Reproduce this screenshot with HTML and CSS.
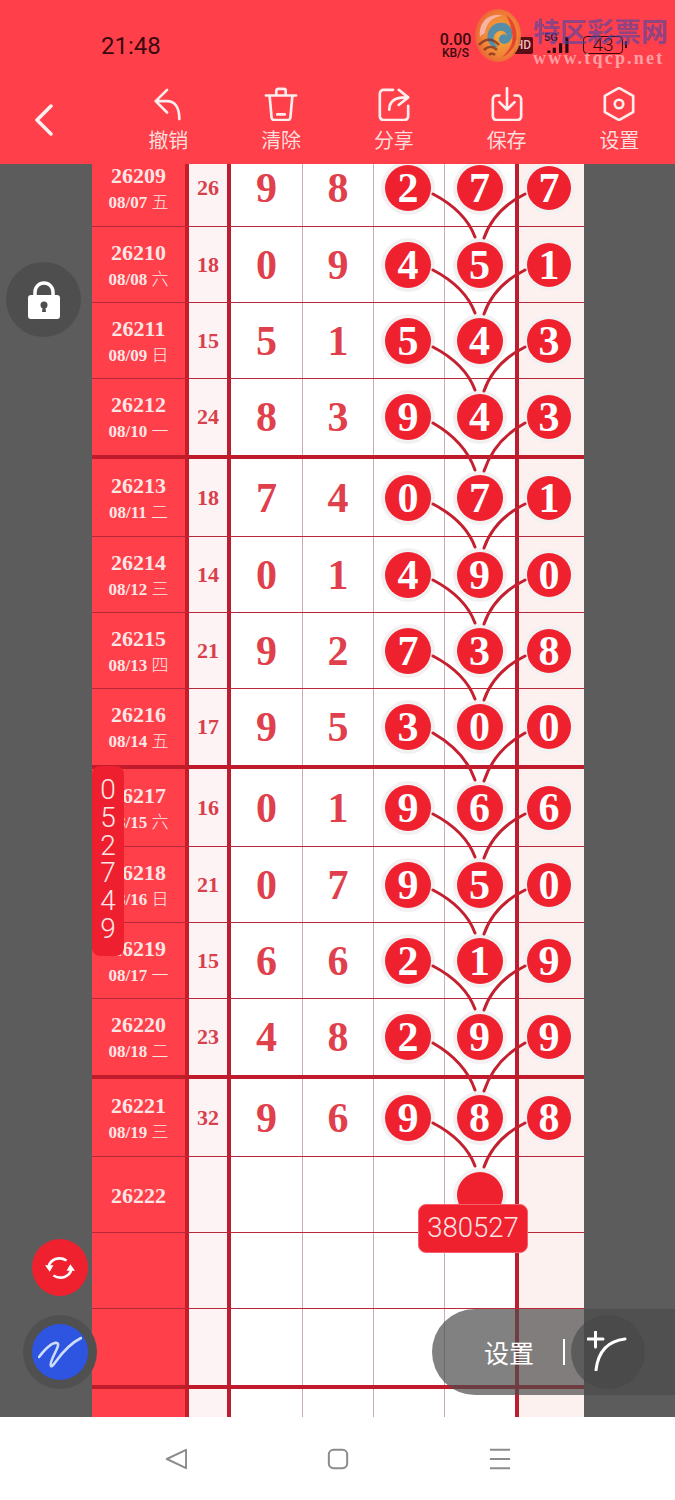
FILE: index.html
```html
<!DOCTYPE html>
<html lang="zh">
<head>
<meta charset="utf-8">
<title>规律图</title>
<link rel="stylesheet" href="styles.css">
</head>
<body>
<div class="screen">
  <header class="header">
    <div class="status">
      <span class="time">21:48</span>
      <div class="status-right">
        <div class="speed"><span class="speed-num">0.00</span><span class="speed-unit">KB/S</span></div>
        <span class="hd">HD</span>
        <div class="signal"><span class="five-g">5G</span>
          <svg class="bars" viewBox="0 0 28 20"><path d="M5 16v3M11 13v6M18 8v11M25 1v18"/></svg>
        </div>
        <span class="battery">43</span>
      </div>
    </div>
    <nav class="toolbar">
      <svg class="back" viewBox="0 0 20 32"><path d="M17 2 3 16l14 14"/></svg>
      <div class="tools">
        <div class="tool"><svg viewBox="0 0 36 36"><path d="M17 3 5 15l12 12M5 15h12c8 0 13 6 13 19"/></svg><span>撤销</span></div>
        <div class="tool"><svg viewBox="0 0 36 36"><path d="M2 9h32M13 8V4a2 2 0 0 1 2-2h6a2 2 0 0 1 2 2v4M6 10l2 22a3 3 0 0 0 3 3h14a3 3 0 0 0 3-3l2-22M14 29h8"/></svg><span>清除</span></div>
        <div class="tool"><svg viewBox="0 0 36 36"><path d="M17 3H7a4 4 0 0 0-4 4v24a4 4 0 0 0 4 4h22a4 4 0 0 0 4-4V20M13 24c0-9 6-13 17-13M23 3l10 8-10 8"/></svg><span>分享</span></div>
        <div class="tool"><svg viewBox="0 0 36 36"><path d="M10 9H7a4 4 0 0 0-4 4v18a4 4 0 0 0 4 4h22a4 4 0 0 0 4-4V13a4 4 0 0 0-4-4h-3M18 1v22M10 16l8 8 8-8"/></svg><span>保存</span></div>
        <div class="tool"><svg viewBox="0 0 36 36"><path d="M18 1 33 9.500v17L18 35 3 26.500v-17z"/><circle cx="18" cy="18" r="4.500"/></svg><span>设置</span></div>
      </div>
    </nav>
    <div class="watermark">
      <svg class="logo" viewBox="0 0 46 53">
        <defs>
          <radialGradient id="orb" cx="55%" cy="50%" r="62%">
            <stop offset="0" stop-color="#f6b23f"/>
            <stop offset=".6" stop-color="#f08a36"/>
            <stop offset="1" stop-color="#ea5238"/>
          </radialGradient>
        </defs>
        <ellipse cx="23" cy="26.500" rx="23" ry="26.500" fill="url(#orb)"/>
        <path d="M5 28C3 13 15 3 28 7 18 7 11 14 10 24c-2 1-4 2-5 4z" fill="#fab9a9"/>
        <path d="M13 32c-3-11 6-20 16-18 9 2 11 13 5 19-5 4-11 1-10-4 1-4 6-5 8-2-1-5-7-7-11-3-4 4-3 11 2 14-4 1-8-1-10-6z" fill="#4f93ad"/>
        <path d="M31 6c9 6 13 18 9 29-3 7-8 11-13 13 8-7 12-15 10-24-1-8-3-13-6-18z" fill="#e8472f"/>
        <path class="logo-wifi" d="M4 36c6-7 14-7 20 0M9 41c4-4 9-4 13 0M14 46c2-2 4-2 6 0"/>
      </svg>
      <div class="mark-text">
        <span class="mark-cn">特区彩票网</span>
        <span class="mark-url">www.tqcp.net</span>
      </div>
    </div>
  </header>

  <main class="main">
    <div class="sheet">
      <div class="row tall">
        <div class="issue"><b>26209</b><span>08/07 <i>五</i></span></div><div class="sum">26</div><div class="num">9</div><div class="num">8</div><div class="ball-cell"><span class="ball">2</span></div><div class="ball-cell mid"><span class="ball">7</span></div><div class="ball-cell end"><span class="ball small">7</span></div>
      </div>
      <div class="row">
        <div class="issue"><b>26210</b><span>08/08 <i>六</i></span></div><div class="sum">18</div><div class="num">0</div><div class="num">9</div><div class="ball-cell"><span class="ball">4</span></div><div class="ball-cell mid"><span class="ball">5</span></div><div class="ball-cell end"><span class="ball small">1</span></div>
      </div>
      <div class="row">
        <div class="issue"><b>26211</b><span>08/09 <i>日</i></span></div><div class="sum">15</div><div class="num">5</div><div class="num">1</div><div class="ball-cell"><span class="ball">5</span></div><div class="ball-cell mid"><span class="ball">4</span></div><div class="ball-cell end"><span class="ball small">3</span></div>
      </div>
      <div class="row thick">
        <div class="issue"><b>26212</b><span>08/10 <i>一</i></span></div><div class="sum">24</div><div class="num">8</div><div class="num">3</div><div class="ball-cell"><span class="ball">9</span></div><div class="ball-cell mid"><span class="ball">4</span></div><div class="ball-cell end"><span class="ball small">3</span></div>
      </div>
      <div class="row tall">
        <div class="issue"><b>26213</b><span>08/11 <i>二</i></span></div><div class="sum">18</div><div class="num">7</div><div class="num">4</div><div class="ball-cell"><span class="ball">0</span></div><div class="ball-cell mid"><span class="ball">7</span></div><div class="ball-cell end"><span class="ball small">1</span></div>
      </div>
      <div class="row">
        <div class="issue"><b>26214</b><span>08/12 <i>三</i></span></div><div class="sum">14</div><div class="num">0</div><div class="num">1</div><div class="ball-cell"><span class="ball">4</span></div><div class="ball-cell mid"><span class="ball">9</span></div><div class="ball-cell end"><span class="ball small">0</span></div>
      </div>
      <div class="row">
        <div class="issue"><b>26215</b><span>08/13 <i>四</i></span></div><div class="sum">21</div><div class="num">9</div><div class="num">2</div><div class="ball-cell"><span class="ball">7</span></div><div class="ball-cell mid"><span class="ball">3</span></div><div class="ball-cell end"><span class="ball small">8</span></div>
      </div>
      <div class="row thick">
        <div class="issue"><b>26216</b><span>08/14 <i>五</i></span></div><div class="sum">17</div><div class="num">9</div><div class="num">5</div><div class="ball-cell"><span class="ball">3</span></div><div class="ball-cell mid"><span class="ball">0</span></div><div class="ball-cell end"><span class="ball small">0</span></div>
      </div>
      <div class="row tall">
        <div class="issue"><b>26217</b><span>08/15 <i>六</i></span></div><div class="sum">16</div><div class="num">0</div><div class="num">1</div><div class="ball-cell"><span class="ball">9</span></div><div class="ball-cell mid"><span class="ball">6</span></div><div class="ball-cell end"><span class="ball small">6</span></div>
      </div>
      <div class="row">
        <div class="issue"><b>26218</b><span>08/16 <i>日</i></span></div><div class="sum">21</div><div class="num">0</div><div class="num">7</div><div class="ball-cell"><span class="ball">9</span></div><div class="ball-cell mid"><span class="ball">5</span></div><div class="ball-cell end"><span class="ball small">0</span></div>
      </div>
      <div class="row">
        <div class="issue"><b>26219</b><span>08/17 <i>一</i></span></div><div class="sum">15</div><div class="num">6</div><div class="num">6</div><div class="ball-cell"><span class="ball">2</span></div><div class="ball-cell mid"><span class="ball">1</span></div><div class="ball-cell end"><span class="ball small">9</span></div>
      </div>
      <div class="row thick">
        <div class="issue"><b>26220</b><span>08/18 <i>二</i></span></div><div class="sum">23</div><div class="num">4</div><div class="num">8</div><div class="ball-cell"><span class="ball">2</span></div><div class="ball-cell mid"><span class="ball">9</span></div><div class="ball-cell end"><span class="ball small">9</span></div>
      </div>
      <div class="row tall">
        <div class="issue"><b>26221</b><span>08/19 <i>三</i></span></div><div class="sum">32</div><div class="num">9</div><div class="num">6</div><div class="ball-cell"><span class="ball">9</span></div><div class="ball-cell mid"><span class="ball">8</span></div><div class="ball-cell end"><span class="ball small">8</span></div>
      </div>
      <div class="row">
        <div class="issue"><b>26222</b></div><div class="sum"></div><div class="num"></div><div class="num"></div><div class="ball-cell"></div><div class="ball-cell mid"><span class="ball"></span></div><div class="ball-cell end"></div>
      </div>
      <div class="row">
        <div class="issue"></div><div class="sum"></div><div class="num"></div><div class="num"></div><div class="ball-cell"></div><div class="ball-cell mid"></div><div class="ball-cell end"></div>
      </div>
      <div class="row thick">
        <div class="issue"></div><div class="sum"></div><div class="num"></div><div class="num"></div><div class="ball-cell"></div><div class="ball-cell mid"></div><div class="ball-cell end"></div>
      </div>
      <div class="row">
        <div class="issue"></div><div class="sum"></div><div class="num"></div><div class="num"></div><div class="ball-cell"></div><div class="ball-cell mid"></div><div class="ball-cell end"></div>
      </div>

      <svg class="links" viewBox="92 149 492 1310">
        <defs>
          <g id="l76"><path d="M-46 6C-27 16-11 30-4 49M46 6C26 16 12 30 5 50"/></g>
          <g id="l80"><path d="M-46 6C-27 17-11 33-4 53M46 6C26 17 12 33 5 54"/></g>
        </defs>
        <use href="#l76" x="479" y="188"/>
        <use href="#l76" x="479" y="264"/>
        <use href="#l76" x="479" y="341"/>
        <use href="#l80" x="479" y="417"/>
        <use href="#l76" x="479" y="498"/>
        <use href="#l76" x="479" y="574"/>
        <use href="#l76" x="479" y="650"/>
        <use href="#l80" x="479" y="727"/>
        <use href="#l76" x="479" y="808"/>
        <use href="#l76" x="479" y="884"/>
        <use href="#l76" x="479" y="960"/>
        <use href="#l80" x="479" y="1037"/>
        <use href="#l76" x="479" y="1117"/>
      </svg>
      <div class="result">380527</div>
      <div class="drawer"><span>0</span><span>5</span><span>2</span><span>7</span><span>4</span><span>9</span></div>
    </div>

    <button class="float lock" type="button">
      <svg viewBox="0 0 34 40"><path class="lock-arc" d="M8 18v-6a9 9 0 0 1 18 0v6"/><rect x="1" y="15" width="32" height="24" rx="3"/><circle class="lock-hole" cx="17" cy="25" r="3.500"/><path class="lock-hole" d="M15.800 26h2.400l.8 6h-4z"/></svg>
    </button>
    <button class="float refresh" type="button">
      <svg viewBox="0 0 32 32"><path d="M4 14C6 7 15 3 23 8M28 18c-2 7-11 11-19 6"/><path class="fill" d="M0 13h9l-4 7zM32 19h-9l4-7z"/></svg>
    </button>
    <button class="float pen" type="button">
      <svg viewBox="0 0 44 32"><path d="M1 21C8 12 15 6 19 7c5 1-9 19-6 23 2 3 10-18 30-28"/></svg>
    </button>
    <div class="pill">
      <span class="pill-label">设置</span>
      <span class="pill-sep"></span>
      <span class="pill-btn">
        <svg viewBox="0 0 40 40"><path d="M1 8h15M8.500 1v15M9 39C11 22 20 10 38 8"/></svg>
      </span>
    </div>
  </main>

  <footer class="nav">
    <svg class="nav-back" viewBox="0 0 24 24"><path d="M23 2 2 12l21 10z"/></svg>
    <svg class="nav-home" viewBox="0 0 24 24"><rect x="2" y="2" width="20" height="20" rx="5"/></svg>
    <svg class="nav-menu" viewBox="0 0 24 24"><path d="M1 2h22M1 12h22M1 22h22"/></svg>
  </footer>
</div>
</body>
</html>
```
FILE: styles.css
```css
* { box-sizing: border-box; }
html, body { margin: 0; padding: 0; }
body { font-family: "Noto Sans CJK SC", "Noto Sans", sans-serif; background: #fff; }

.screen { width: 675px; height: 1500px; display: flex; flex-direction: column; overflow: hidden; }

/* header */
.header { position: relative; height: 164px; flex: none; background: #ff3f49; color: #fde9e9; }
.status { display: flex; justify-content: space-between; align-items: center; height: 48px; margin-top: 21px; padding: 0 52px 0 101px; color: #3a0a10; }
.time { font-family: Roboto, sans-serif; font-size: 24px; line-height: 48px; padding-top: 1px; }
.status-right { display: flex; align-items: center; }
.speed { display: flex; flex-direction: column; align-items: center; width: 35px; margin-right: 40px; font-family: Roboto, sans-serif; font-weight: 500; }
.speed-num { font-size: 16px; line-height: 15px; }
.speed-unit { font-size: 12px; line-height: 12px; }
.hd { width: 20px; height: 17px; margin-right: 10px; background: #5a0f18; color: #f5b7b7; border-radius: 2px; font: 500 12px/17px Roboto, sans-serif; text-align: center; }
.signal { position: relative; width: 30px; height: 18px; margin-right: 10px; }
.five-g { position: absolute; left: 1px; top: -3px; font: 500 11px/10px Roboto, sans-serif; }
.bars { display: block; width: 28px; height: 18px; }
.bars path { stroke: #2c0a10; stroke-width: 3.500; fill: none; }
.battery { position: relative; width: 40px; height: 18px; border: 1.500px solid #3a0a10; border-radius: 4px; font: 300 19px/15px Roboto, sans-serif; text-align: center; }
.battery::after { content: ""; position: absolute; right: -5px; top: 4px; width: 2px; height: 7px; background: #3a0a10; }

.toolbar { display: flex; align-items: flex-start; height: 95px; }
.back { width: 20px; height: 32px; margin: 35px 0 0 34px; flex: none; }
.back path { fill: none; stroke: #fdf0f0; stroke-width: 3.500; stroke-linecap: round; stroke-linejoin: round; }
.tools { display: flex; margin-left: 58px; }
.tool { width: 112.750px; flex: none; display: flex; flex-direction: column; align-items: center; padding-top: 18px; }
.tool svg { width: 34px; height: 34px; display: block; }
.tool svg path, .tool svg circle { fill: none; stroke: #fdeeee; stroke-width: 2.800; stroke-linecap: round; stroke-linejoin: round; }
.tool span { font-size: 20px; line-height: 28px; margin-top: 5px; color: #fcdcdc; }

.watermark { position: absolute; left: 475px; top: 9px; display: flex; pointer-events: none; }
.logo { width: 46px; height: 53px; display: block; flex: none; opacity: .95; }
.logo-wifi { fill: none; stroke: #6a2a20; stroke-width: 2.500; opacity: .7; }
.mark-text { display: flex; flex-direction: column; margin: 6px 0 0 12px; }
.mark-cn { font-size: 27px; line-height: 32px; font-weight: 700; color: rgba(70, 70, 170, .62); white-space: nowrap; }
.mark-url { font-family: "Liberation Serif", serif; font-size: 18px; font-weight: 700; line-height: 20px; letter-spacing: 2.200px; color: rgba(255, 225, 225, .6); margin-top: 1px; white-space: nowrap; }

/* sheet */
.main { position: relative; flex: 1; background: #5c5c5c; overflow: hidden; }
.sheet { position: relative; width: 492px; margin: -15px 0 0 92px; font-family: "Liberation Serif", "Noto Sans CJK SC", serif; }
.row { display: grid; grid-template-columns: 97px 42px 72px 71px 71px 74px 65px; height: 76px; border-bottom: 1px solid #b8283a; background: #fff; }
.row.tall { height: 78px; }
.row.thick { height: 80px; border-bottom: 4px solid #c01b2a; }
.row > div { display: flex; align-items: center; justify-content: center; }

.issue { flex-direction: column; gap: 4px; padding-top: 2px; background: #ff3f49; border-right: 4px solid #c61d2b; color: #fbe6e6; }
.issue b { font-size: 22px; line-height: 22px; }
.issue span { font-size: 17px; font-weight: 700; line-height: 20px; white-space: nowrap; }
.issue i { font-family: "Noto Sans CJK SC", sans-serif; font-style: normal; font-weight: 300; }
.sum { background: #fdf3f4; border-right: 4px solid #bb1e2e; color: #d8404c; font-size: 22px; font-weight: 700; }
.num { border-right: 1px solid #c9abb1; color: #e0404c; font-size: 42px; font-weight: 700; }
.ball-cell { border-right: 1px solid #c9abb1; padding-right: 2px; }
.ball-cell.mid { border-right: 4px solid #bb1e2e; padding-right: 1px; }
.ball-cell.end { border-right: 0; background: #fdf1f0; padding-right: 5px; }
.ball { position: relative; z-index: 1; width: 46px; height: 46px; flex: none; border-radius: 50%; background: #ef212f; box-shadow: 0 0 0 4px #f3f0f1; color: #fff; font-size: 42px; font-weight: 700; line-height: 46px; text-align: center; }
.ball.small { width: 44px; height: 44px; line-height: 44px; }

.links { position: absolute; left: 0; top: 0; width: 492px; height: 1310px; z-index: 2; pointer-events: none; }
.links path { fill: none; stroke: #c4202f; stroke-width: 3; stroke-linecap: round; }

.result { position: absolute; left: 326px; top: 1055px; z-index: 3; width: 110px; height: 49px; background: #ef212f; border: 1px solid #f4606c; border-radius: 8px; color: #fbe3e3; font: 300 27.500px/46px Roboto, sans-serif; text-align: center; }
.drawer { position: absolute; left: 0; top: 617px; z-index: 3; width: 32px; height: 190px; padding-top: 10px; background: #ee2030; border-radius: 8px; color: #fde6e6; font: 300 28px/27.800px Roboto, sans-serif; display: flex; flex-direction: column; align-items: center; }

/* floating controls */
.float { position: absolute; padding: 0; border: 0; border-radius: 50%; display: flex; align-items: center; justify-content: center; }
.lock { left: 6px; top: 98px; width: 75px; height: 75px; background: #4e4e4e; }
.lock svg { width: 34px; height: 40px; display: block; }
.lock rect { fill: #fff; }
.lock-arc { fill: none; stroke: #fff; stroke-width: 3.500; }
.lock-hole { fill: #4e4e4e; }
.refresh { left: 32px; top: 1075px; width: 56px; height: 57px; background: #ef212f; }
.refresh svg { width: 30px; height: 30px; display: block; }
.refresh path { fill: none; stroke: #fff; stroke-width: 2.800; }
.refresh path.fill { fill: #fff; stroke: none; }
.pen { left: 32px; top: 1160px; width: 56px; height: 56px; background: #2d55e2; box-shadow: 0 0 0 9px #505050; }
.pen svg { width: 44px; height: 32px; display: block; }
.pen path { fill: none; stroke: #cdddf8; stroke-width: 2.600; stroke-linecap: round; stroke-linejoin: round; }

.pill { position: absolute; left: 432px; top: 1145px; z-index: 4; width: 243px; height: 86px; border-radius: 43px 0 0 43px; background: rgba(75, 75, 75, .7); display: flex; align-items: center; color: #fff; }
.pill-label { font-size: 25px; line-height: 30px; margin-left: 52px; }
.pill-sep { width: 2px; height: 26px; margin-left: 29px; background: #fff; }
.pill-btn { width: 74px; height: 74px; margin-left: 6px; border-radius: 50%; background: rgba(70, 70, 70, .6); display: flex; align-items: center; justify-content: center; }
.pill-btn svg { width: 40px; height: 40px; display: block; margin: -2px 0 0 -2px; }
.pill-btn path { fill: none; stroke: #fff; stroke-width: 3; stroke-linecap: round; }

/* system nav */
.nav { height: 83px; flex: none; background: #fff; display: flex; align-items: center; justify-content: center; gap: 140px; }
.nav svg { width: 22px; height: 22px; display: block; }
.nav path, .nav rect { fill: none; stroke: #8c8c8c; stroke-width: 2.200; stroke-linejoin: round; }
```
